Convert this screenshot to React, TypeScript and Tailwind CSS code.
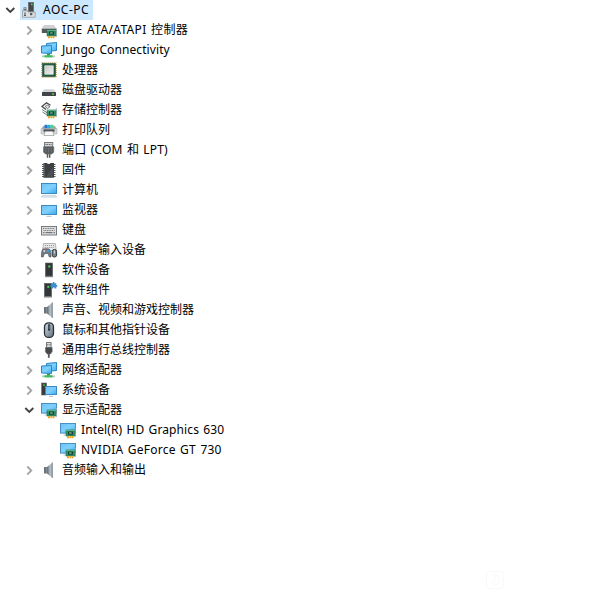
import type { ReactNode } from "react";

const Defs = () => (
  <svg width="0" height="0" className="absolute">
    <defs>
      <linearGradient id="screen" x1="0" y1="0" x2="1" y2="1">
        <stop offset="0" stopColor="#6cc4f8" />
        <stop offset="0.5" stopColor="#7fd0fc" />
        <stop offset="1" stopColor="#38a8ec" />
      </linearGradient>
      <linearGradient id="metal" x1="0" y1="0" x2="1" y2="0">
        <stop offset="0" stopColor="#5d6870" />
        <stop offset="0.6" stopColor="#b9c3cb" />
        <stop offset="1" stopColor="#8b959c" />
      </linearGradient>
      <linearGradient id="mouse" x1="0" y1="0" x2="1" y2="1">
        <stop offset="0" stopColor="#d3e0ec" />
        <stop offset="1" stopColor="#5d6c79" />
      </linearGradient>
      <linearGradient id="chip" x1="0" y1="0" x2="1" y2="1">
        <stop offset="0" stopColor="#c9c9c7" />
        <stop offset="1" stopColor="#efefed" />
      </linearGradient>
    </defs>
  </svg>
);

const Card = () => (
  <g>
    <path d="M15.4 6v9" stroke="#aeb4b8" strokeWidth="0.8" />
    <rect x="6" y="8" width="9" height="6" fill="#2f9468" stroke="#1f6b4a" strokeWidth="0.6" />
    <path d="M6 8.4h9" stroke="#6cc39a" strokeWidth="0.8" />
    <rect x="8" y="9.5" width="5" height="3.2" fill="#173f31" />
    <rect x="9.2" y="10.3" width="2.4" height="1.4" fill="#7fb89f" />
    <path d="M7 15.2h2M9.5 15.2h2M12 15.2h1.5" stroke="#f0a41c" strokeWidth="2" />
  </g>
);

const Tower = () => (
  <g>
    <rect x="4.4" y="1" width="7.2" height="13.4" fill="#34373a" stroke="#5f6366" strokeWidth="0.6" />
    <rect x="4" y="13.8" width="8" height="1.4" fill="#7b7f82" />
    <rect x="7.3" y="3.5" width="2" height="2" fill="#45de50" />
  </g>
);

const Network = () => (
  <g>
    <path d="M5.5 1.5 15.5.5v8l-10 1z" fill="url(#screen)" stroke="#2b86c4" />
    <path d="M.5 4 10.5 3.5v8L.5 11z" fill="url(#screen)" stroke="#2b86c4" />
    <path d="M1 13.6h3v1.6H1zM11 13.6h3v1.6h-3z" fill="#b4c9bb" />
    <path d="M3.5 13.2h8v2.3h-8z" fill="#3fbe5f" />
    <path d="M6 11.8h3v1.7H6z" fill="#2f9b4b" />
  </g>
);

const Speaker = () => (
  <g>
    <path d="M3 5h2.8v6.5H3z" fill="#68737b" />
    <path d="M6 5 11.5 0.5v15.5L6 11.5z" fill="url(#metal)" />
    <path d="M11.3 0.5v15.5" stroke="#7d878e" strokeWidth="0.8" />
  </g>
);

const Display = () => (
  <g>
    <rect x="0.5" y="1.5" width="15" height="9.6" fill="url(#screen)" stroke="#4a8fc0" />
    <path d="M3.5 13h3" stroke="#b7c7d2" />
    <Card />
  </g>
);

const icons: Record<string, ReactNode> = {
  pc: (
    <g>
      <rect x="7.3" y="0.3" width="5.4" height="9.5" fill="#46494c" stroke="#6b6f72" strokeWidth="0.6" />
      <rect x="10" y="1.6" width="1.6" height="1.6" fill="#48e055" />
      <rect x="2.5" y="5.3" width="3" height="3.5" fill="#6f7376" />
      <rect x="3.5" y="6" width="1" height="1" fill="#e5e5e5" />
      <path d="M1.5 8.7h5.3v1.3h7.4v5.3H1.5z" fill="#dedfe0" stroke="#8e9194" strokeWidth="0.7" />
      <path d="M4 10.5v2M3 13.3h2M10 11v2.4M9 12h2.5" stroke="#303336" />
    </g>
  ),
  ide: (
    <g>
      <path d="M3.2 3.5h9.6L15.2 7H0.8z" fill="#d0d2d3" stroke="#b4b7b9" strokeWidth="0.5" />
      <rect x="0.8" y="6.8" width="14.4" height="4.2" rx="0.6" fill="#54595c" />
      <Card />
    </g>
  ),
  network: <Network />,
  cpu: (
    <g>
      <rect x="0.7" y="0.7" width="14.6" height="14.6" fill="none" stroke="#b99845" strokeWidth="1" strokeDasharray="1 1" />
      <rect x="1.5" y="1.5" width="13" height="13" fill="#23593f" stroke="#1b4833" strokeWidth="0.6" />
      <rect x="3.8" y="3.8" width="8.4" height="8.4" fill="url(#chip)" stroke="#f5f5f3" strokeWidth="0.6" />
    </g>
  ),
  disk: (
    <g>
      <path d="M3.2 7.3h9.6L15 10.5H1z" fill="#d2d3d4" />
      <rect x="1" y="10" width="14" height="4" rx="0.5" fill="#414548" />
      <rect x="11" y="11.4" width="2" height="1.3" fill="#4fe25a" />
    </g>
  ),
  storage: (
    <g>
      <path d="M9.5 3.2 5.5.8 1 4.5l4 3" stroke="#45494c" strokeWidth="1.3" fill="none" />
      <path d="M4 4.5 6.5 3 9 4.7 6.5 6.5z" fill="#e4e4e4" stroke="#5c6063" strokeWidth="0.8" />
      <path d="M1 7.5l5 3.2M1.5 10l4 2.7" stroke="#74787b" strokeWidth="1" fill="none" />
      <Card />
    </g>
  ),
  printer: (
    <g>
      <path d="M2 4h12l2 3.5V12H0V7.5z" fill="#a4a9ac" />
      <rect x="3.5" y="2.8" width="3" height="3.6" fill="#2179d4" />
      <rect x="6.5" y="2.8" width="3" height="3.6" fill="#29aee4" />
      <rect x="9.5" y="2.8" width="3" height="3.6" fill="#4ed08a" />
      <path d="M0 6.7h16V12H0z" fill="#d4d7d8" stroke="#9da1a4" strokeWidth="0.5" />
      <path d="M2.5 7.4h11v2.3h-11z" fill="#45494c" />
      <path d="M4.2 9.2h7.6l1.3 4.3H2.9z" fill="#f8f8f8" stroke="#85898c" strokeWidth="0.6" />
    </g>
  ),
  port: (
    <g>
      <rect x="3.5" y="0.5" width="8.2" height="4.5" fill="#d5d6d7" stroke="#777b7e" />
      <path d="M4.5 2.5h6" stroke="#54585b" strokeDasharray="1 0.7" />
      <path d="M2.5 4.8h10.3v5.5L10.7 12H4.6L2.5 10.3z" fill="#55595c" stroke="#707477" strokeWidth="0.6" />
      <path d="M5 6v4.5M7.6 6v4.5M10.2 6v4.5" stroke="#777b7e" strokeWidth="0.8" />
      <path d="M6.5 12v3.8M8.7 12v3.8" stroke="#5a5e61" strokeWidth="1.5" />
    </g>
  ),
  firmware: (
    <g>
      <path d="M1 2.5h13.5M1 4.5h13.5M1 6.5h13.5M1 8.5h13.5M1 10.5h13.5M1 12.5h13.5M1 14.5h13.5" stroke="#55595c" />
      <path d="M2.5 1h3.2q2 2.2 4 0H13v14.7H2.5z" fill="#3c4043" />
      <path d="M3.3 1.5v14" stroke="#6b6f72" strokeWidth="0.8" />
      <path d="M5 14.5 12 5v10z" fill="#4c5053" />
    </g>
  ),
  computer: (
    <g>
      <rect x="0.5" y="1.5" width="15" height="10" fill="url(#screen)" stroke="#3a8ac4" />
      <path d="M1.5 13.3h13l1.3 1.9H.2z" fill="#dce5eb" stroke="#b3c2cd" strokeWidth="0.5" />
    </g>
  ),
  monitor: (
    <g>
      <rect x="0.5" y="3.5" width="15" height="9" fill="url(#screen)" stroke="#3a8ac4" />
      <path d="M5.5 14.3h5" stroke="#aac0cf" />
    </g>
  ),
  keyboard: (
    <g>
      <rect x="0.5" y="4.5" width="15" height="8.5" fill="#dcdee0" stroke="#777b7e" />
      <path d="M2 6.5h12M2.5 8.5h11" stroke="#74787b" strokeDasharray="1 0.7" />
      <path d="M2 10.7h1.5M4.5 10.7h7M12.5 10.7h1.5" stroke="#5d6164" />
    </g>
  ),
  hid: (
    <g>
      <path d="M2.5 1.5h11.8l1 7H1.5z" fill="#e8e9ea" stroke="#a0a3a6" strokeWidth="0.8" />
      <path d="M4 3.5h9.5M3.7 5.5h10" stroke="#8d9194" strokeDasharray="1 1" />
      <path d="M.5 15Q0 7.5 2.8 6.8H7.5Q10.2 7.5 10 15H8.3L7 11.5H3.5L2.2 15z" fill="#737c84" stroke="#474e54" strokeWidth="0.6" />
      <circle cx="3.3" cy="9" r="1" fill="#dfe3e6" />
      <circle cx="4.8" cy="7.4" r="0.8" fill="#db4d39" />
      <circle cx="7" cy="9" r="1.3" fill="#2ea4ec" />
      <rect x="11.2" y="7.5" width="4.4" height="7.5" rx="2" fill="#77838e" stroke="#343a3e" />
      <path d="M13.4 8.5v3" stroke="#dce7ef" strokeWidth="0.9" />
    </g>
  ),
  softwareDevice: <Tower />,
  softwareComponent: (
    <g>
      <g transform="translate(-1 0.3)"><Tower /></g>
      <path d="M10.2 1.2h1.6V0h1.6v1.2h1.9V3h1v1.8h-1v1.6h-1.7V5.4h-1.4v1H10.2V4.8H9.4V3h.8z" fill="#3c8ed0" />
    </g>
  ),
  sound: <Speaker />,
  mouse: (
    <g>
      <rect x="3.5" y="0.8" width="9" height="14.6" rx="4" fill="url(#mouse)" stroke="#2b3135" strokeWidth="1.3" />
      <rect x="7" y="2.2" width="2.2" height="6.6" rx="1" fill="#262b2f" />
      <path d="M8.1 3.5v3.5" stroke="#8199aa" strokeWidth="0.8" />
    </g>
  ),
  usb: (
    <g>
      <rect x="5.5" y="0.5" width="4.6" height="5" fill="#dcddde" stroke="#777b7e" />
      <path d="M6.8 2v1.4M8.9 2v1.4" stroke="#4d5154" strokeWidth="0.8" />
      <path d="M4.4 5.5h6.8v4.3L9.5 12H6.1L4.4 9.8z" fill="#45494c" stroke="#696d70" strokeWidth="0.5" />
      <path d="M7.8 12v3.8" stroke="#55595c" strokeWidth="1.8" />
    </g>
  ),
  system: (
    <g>
      <rect x="0.6" y="1" width="5" height="12" fill="#383c3f" stroke="#666a6d" strokeWidth="0.6" />
      <rect x="2.3" y="2.3" width="1.5" height="1.5" fill="#48de52" />
      <rect x="4.5" y="4.5" width="11" height="8" fill="url(#screen)" stroke="#3a8ac4" />
      <path d="M8 14.3h4" stroke="#a9bac6" />
    </g>
  ),
  display: <Display />,
};

const devices = [
  { icon: "ide", label: "IDE ATA/ATAPI 控制器", tracking: "tracking-[0.35px]" },
  { icon: "network", label: "Jungo Connectivity", tracking: "tracking-[0.09px]" },
  { icon: "cpu", label: "处理器" },
  { icon: "disk", label: "磁盘驱动器" },
  { icon: "storage", label: "存储控制器" },
  { icon: "printer", label: "打印队列" },
  { icon: "port", label: "端口 (COM 和 LPT)", tracking: "tracking-[0.18px]" },
  { icon: "firmware", label: "固件" },
  { icon: "computer", label: "计算机" },
  { icon: "monitor", label: "监视器" },
  { icon: "keyboard", label: "键盘" },
  { icon: "hid", label: "人体学输入设备" },
  { icon: "softwareDevice", label: "软件设备" },
  { icon: "softwareComponent", label: "软件组件" },
  { icon: "sound", label: "声音、视频和游戏控制器" },
  { icon: "mouse", label: "鼠标和其他指针设备" },
  { icon: "usb", label: "通用串行总线控制器" },
  { icon: "network", label: "网络适配器" },
  { icon: "system", label: "系统设备" },
  {
    icon: "display",
    label: "显示适配器",
    children: [
      { label: "Intel(R) HD Graphics 630", tracking: "tracking-[0.11px]" },
      { label: "NVIDIA GeForce GT 730", tracking: "tracking-[0.25px]" },
    ],
  },
  { icon: "sound", label: "音频输入和输出" },
];

function Icon({ name }: { name: string }) {
  return (
    <svg viewBox="0 0 16 16" className="w-4 h-4 shrink-0 overflow-visible">
      {icons[name]}
    </svg>
  );
}

function Chevron({ open }: { open?: boolean }) {
  return (
    <svg viewBox="0 0 10 10" className="w-2.5 h-2.5 shrink-0" fill="none">
      {open ? (
        <path d="M1.3 3l4 4 4-4" stroke="#404040" strokeWidth="1.8" />
      ) : (
        <path d="M3.3 1.5l4 4-4 4" stroke="#a6a6a6" strokeWidth="1.9" />
      )}
    </svg>
  );
}

export default function App() {
  return (
    <div className="relative w-full h-[597px] bg-white overflow-hidden text-black text-[12px] leading-5 whitespace-nowrap [word-spacing:1px] font-['Noto_Sans','Noto_Sans_CJK_SC',sans-serif]">
      <Defs />

      {/* Root */}
      <div className="flex items-center h-5 pl-[5px]">
        <Chevron open />
        <div className="flex items-center h-5 ml-[5px] pl-px pr-[3px] w-[73px] bg-[#cce8ff]">
          <Icon name="pc" />
          <span className="ml-[6px] tracking-[0.5px]">AOC-PC</span>
        </div>
      </div>

      {/* Categories */}
      <ul>
        {devices.map((device, i) => (
          <li key={i}>
            <div className="flex items-center h-5 pl-[24px]">
              <Chevron open={!!device.children} />
              <span className="flex ml-[7px] mr-[5px]">
                <Icon name={device.icon} />
              </span>
              <span className={device.tracking}>{device.label}</span>
            </div>
            {device.children?.map((child) => (
              <div key={child.label} className="flex items-center h-5 pl-[60px] gap-[5px]">
                <Icon name="display" />
                <span className={child.tracking}>{child.label}</span>
              </div>
            ))}
          </li>
        ))}
      </ul>

      {/* Faint watermark */}
      <svg viewBox="0 0 18 18" className="absolute left-[486px] top-[571px] w-[18px] h-[18px]" fill="none" stroke="#f9f9f9">
        <rect x="0.5" y="0.5" width="17" height="17" rx="3" />
        <path d="M5 4h4v6H6M10 5h3v7l-4 2-4-2" />
      </svg>
    </div>
  );
}
